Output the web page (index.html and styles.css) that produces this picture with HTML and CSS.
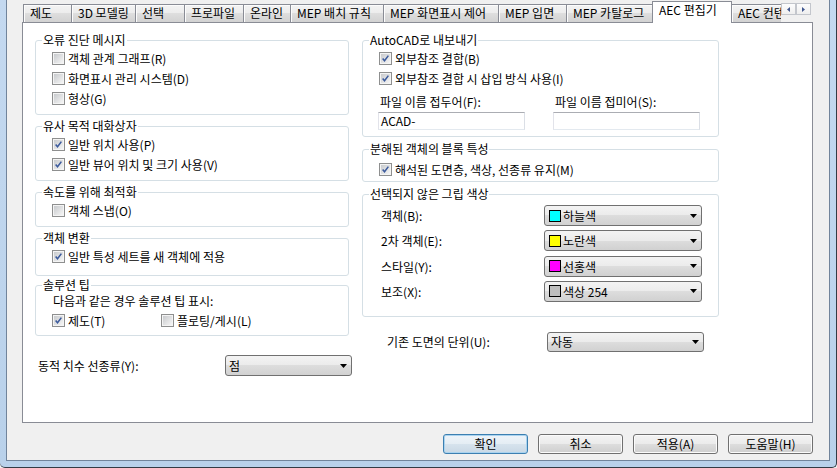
FILE: index.html
```html
<!DOCTYPE html>
<html>
  <head>
    <meta charset="utf-8" />
    <title>옵션 - AEC 편집기</title>
    <link rel="stylesheet" href="styles.css">
  </head>
  <body>
    <div class="frame">
      <div class="dialog">
        <div class="tabs">
          <div class="tab">제도</div>
          <div class="tab">3D 모델링</div>
          <div class="tab">선택</div>
          <div class="tab">프로파일</div>
          <div class="tab">온라인</div>
          <div class="tab">MEP 배치 규칙</div>
          <div class="tab">MEP 화면표시 제어</div>
          <div class="tab">MEP 입면</div>
          <div class="tab">MEP 카탈로그</div>
          <div class="tab active">AEC 편집기</div>
          <div class="tab">AEC 컨텐츠</div>
          <div class="tab-scroll">
            <span class="scroll-btn"><svg width="3" height="5" viewBox="0 0 3 5"><path d="M3 0 L0 2.5 L3 5 Z"/></svg></span>
            <span class="scroll-btn"><svg width="3" height="5" viewBox="0 0 3 5"><path d="M0 0 L3 2.5 L0 5 Z"/></svg></span>
          </div>
        </div>

        <div class="panel">
          <div class="column left">
            <fieldset class="group">
              <legend>오류 진단 메시지</legend>
              <div class="check"><span class="box"></span>객체 관계 그래프(R)</div>
              <div class="check"><span class="box"></span>화면표시 관리 시스템(D)</div>
              <div class="check"><span class="box"></span>형상(G)</div>
            </fieldset>
            <fieldset class="group">
              <legend>유사 목적 대화상자</legend>
              <div class="check"><span class="box"><svg viewBox="0 0 11 11"><path d="M2 5.5 L4.3 8.2 L9 2"/></svg></span>일반 위치 사용(P)</div>
              <div class="check"><span class="box"><svg viewBox="0 0 11 11"><path d="M2 5.5 L4.3 8.2 L9 2"/></svg></span>일반 뷰어 위치 및 크기 사용(V)</div>
            </fieldset>
            <fieldset class="group">
              <legend>속도를 위해 최적화</legend>
              <div class="check"><span class="box"></span>객체 스냅(O)</div>
            </fieldset>
            <fieldset class="group convert">
              <legend>객체 변환</legend>
              <div class="check"><span class="box"><svg viewBox="0 0 11 11"><path d="M2 5.5 L4.3 8.2 L9 2"/></svg></span>일반 특성 세트를 새 객체에 적용</div>
            </fieldset>
            <fieldset class="group tips">
              <legend>솔루션 팁</legend>
              <div class="hint">다음과 같은 경우 솔루션 팁 표시:</div>
              <div class="check-pair">
                <div class="check"><span class="box"><svg viewBox="0 0 11 11"><path d="M2 5.5 L4.3 8.2 L9 2"/></svg></span>제도(T)</div>
                <div class="check"><span class="box"></span>플로팅/게시(L)</div>
              </div>
            </fieldset>
            <div class="field-row linetype">
              <span class="field-label">동적 치수 선종류(Y):</span>
              <div class="combo"><span class="combo-text">점</span><svg class="combo-arrow" width="7" height="4" viewBox="0 0 7 4"><path d="M0 0 H7 L3.5 4 Z"/></svg></div>
            </div>
          </div>

          <div class="column right">
            <fieldset class="group">
              <legend>AutoCAD로 내보내기</legend>
              <div class="check"><span class="box"><svg viewBox="0 0 11 11"><path d="M2 5.5 L4.3 8.2 L9 2"/></svg></span>외부참조 결합(B)</div>
              <div class="check"><span class="box"><svg viewBox="0 0 11 11"><path d="M2 5.5 L4.3 8.2 L9 2"/></svg></span>외부참조 결합 시 삽입 방식 사용(I)</div>
              <div class="file-names">
                <span class="file-label">파일 이름 접두어(F):</span>
                <span class="file-label">파일 이름 접미어(S):</span>
                <div class="textbox">ACAD-</div>
                <div class="textbox"></div>
              </div>
            </fieldset>
            <fieldset class="group exploded">
              <legend>분해된 객체의 블록 특성</legend>
              <div class="check"><span class="box"><svg viewBox="0 0 11 11"><path d="M2 5.5 L4.3 8.2 L9 2"/></svg></span>해석된 도면층, 색상, 선종류 유지(M)</div>
            </fieldset>
            <fieldset class="group grips-group">
              <legend>선택되지 않은 그립 색상</legend>
              <div class="grips">
                <span class="grip-label">객체(B):</span>
                <div class="combo"><span class="swatch cyan"></span><span class="combo-text">하늘색</span><svg class="combo-arrow" width="7" height="4" viewBox="0 0 7 4"><path d="M0 0 H7 L3.5 4 Z"/></svg></div>
                <span class="grip-label">2차 객체(E):</span>
                <div class="combo"><span class="swatch yellow"></span><span class="combo-text">노란색</span><svg class="combo-arrow" width="7" height="4" viewBox="0 0 7 4"><path d="M0 0 H7 L3.5 4 Z"/></svg></div>
                <span class="grip-label">스타일(Y):</span>
                <div class="combo"><span class="swatch magenta"></span><span class="combo-text">선홍색</span><svg class="combo-arrow" width="7" height="4" viewBox="0 0 7 4"><path d="M0 0 H7 L3.5 4 Z"/></svg></div>
                <span class="grip-label">보조(X):</span>
                <div class="combo"><span class="swatch gray"></span><span class="combo-text">색상 254</span><svg class="combo-arrow" width="7" height="4" viewBox="0 0 7 4"><path d="M0 0 H7 L3.5 4 Z"/></svg></div>
              </div>
            </fieldset>
            <div class="field-row units">
              <span class="field-label">기존 도면의 단위(U):</span>
              <div class="combo"><span class="combo-text">자동</span><svg class="combo-arrow" width="7" height="4" viewBox="0 0 7 4"><path d="M0 0 H7 L3.5 4 Z"/></svg></div>
            </div>
          </div>
        </div>

        <div class="buttons">
          <button class="btn default">확인</button>
          <button class="btn">취소</button>
          <button class="btn">적용(A)</button>
          <button class="btn">도움말(H)</button>
        </div>
      </div>
    </div>
  </body>
</html>
```

FILE: styles.css
```css
body {
  margin: 0;
  font-family: "Noto Sans CJK KR", "Noto Sans", sans-serif;
  font-size: 12px;
  color: #000;
  background: #f0f0f0;
}
/* window glass around the dialog */
.frame {
  width: 837px;
  height: 468px;
  box-sizing: border-box;
  display: flex;
  padding: 0 6px 6px 6px;
  background: linear-gradient(to bottom, #c4d9f0, #b9d1ea);
  border-right: 1px solid #333b45;
  border-bottom: 1px solid #333b45;
  border-bottom-left-radius: 5px;
  border-bottom-right-radius: 5px;
}
.dialog {
  flex: 1;
  display: flex;
  flex-direction: column;
  background: #f0f0f0;
  border: 1px solid #71849b;
  border-top: none;
  padding: 0 16px 0 15px;
}
/* Tab strip */
.tabs {
  display: grid;
  grid-template-columns: 48px 64px 49px 59px 47px 93px 115px 68px 87px 78px 50px 31px;
  height: 22px;
  margin-left: 1px;
}
.tab {
  margin-top: 4px;
  height: 18px;
  box-sizing: border-box;
  padding-left: 6px;
  line-height: 15px;
  white-space: nowrap;
  overflow: hidden;
  border-top: 1px solid #898c95;
  border-left: 1px solid #898c95;
  background: linear-gradient(#f3f3f3, #ececec 50%, #dedede 50%, #d2d2d2);
  box-shadow: inset 1px 1px 0 #fcfcfc;
}
.tab.active {
  position: relative;
  z-index: 1;
  margin: 1px -1px 0 -1px;
  height: 22px;
  padding-top: 1px;
  line-height: 14px;
  background: #fff;
  border-right: 1px solid #898c95;
  box-shadow: none;
}
.tab-scroll {
  position: relative;
  z-index: 1;
  display: flex;
  margin-top: 3px;
  height: 12px;
  background: #f0f0f0;
}
.scroll-btn {
  width: 15px;
  height: 12px;
  box-sizing: border-box;
  border: 1px solid #c3c6cc;
  background: linear-gradient(#fdfdfd, #eeeeee);
  display: flex;
  align-items: center;
  justify-content: center;
}
.scroll-btn svg {
  fill: #40578f;
}
/* Page area */
.panel {
  height: 401px;
  box-sizing: border-box;
  background: #fff;
  border: 1px solid #898c95;
  display: flex;
  gap: 13px;
  padding: 10px 12px;
}
.column.left {
  width: 314px;
}
.column.right {
  width: 357px;
}
.group {
  margin: 0 0 4px 0;
  padding: 1px 0 6px 6px;
  border: 1px solid #d5dfe5;
  border-radius: 3px;
  min-width: 0;
}
.group legend {
  padding: 0 1px;
  line-height: 14px;
}
.group.convert {
  padding-bottom: 9px;
  margin-bottom: 2px;
}
.group.tips {
  padding-bottom: 5px;
}
.column.right .group {
  margin-bottom: 5px;
}
.check {
  display: flex;
  align-items: center;
  height: 20px;
  padding-left: 10px;
  white-space: nowrap;
}
.box {
  width: 13px;
  height: 13px;
  box-sizing: border-box;
  margin-right: 3px;
  padding: 1px;
  border: 1px solid #8e8f8f;
  background: linear-gradient(135deg, #c8cacd, #f5f5f5) content-box, #f4f4f4;
  flex: none;
}
.box svg {
  display: block;
  width: 9px;
  height: 9px;
  overflow: visible;
}
.box path {
  fill: none;
  stroke: #3b5a9c;
  stroke-width: 1.9;
}
.hint {
  height: 17px;
  line-height: 16px;
  padding-left: 11px;
}
.check-pair {
  display: flex;
}
.check-pair .check:first-child {
  width: 99px;
}
/* Combo boxes */
.combo {
  display: flex;
  align-items: center;
  height: 21px;
  box-sizing: border-box;
  padding: 0 4px 0 3px;
  border: 1px solid #707070;
  border-radius: 3px;
  background: linear-gradient(#f3f3f3, #ebebeb 50%, #dddddd 50%, #d1d1d1);
}
.combo-text {
  flex: 1;
  white-space: nowrap;
}
.combo-arrow {
  flex: none;
  fill: #000;
}
.swatch {
  width: 12px;
  height: 12px;
  box-sizing: border-box;
  border: 1px solid #000;
  margin: 0 2px 0 1px;
  flex: none;
}
.swatch.cyan { background: #00ffff; }
.swatch.yellow { background: #ffff00; }
.swatch.magenta { background: #ff00ff; }
.swatch.gray { background: #bebebe; }
.field-row {
  display: flex;
  align-items: center;
}
.field-row.linetype {
  margin-top: 19px;
  padding-left: 3px;
}
.linetype .field-label {
  width: 187px;
  flex: none;
}
.linetype .combo {
  width: 127px;
  flex: none;
}
.field-row.units {
  margin-top: 15px;
  padding-left: 25px;
}
.units .field-label {
  width: 160px;
  flex: none;
}
.units .combo {
  width: 157px;
  height: 20px;
  flex: none;
}
/* AutoCAD export fields */
.file-names {
  display: grid;
  grid-template-columns: 175px 148px;
  padding-left: 9px;
  margin-top: 7px;
  row-gap: 3px;
}
.file-label {
  padding-left: 2px;
  line-height: 14px;
}
.textbox {
  width: 147px;
  height: 18px;
  box-sizing: border-box;
  padding: 0 2px;
  line-height: 16px;
  border: 1px solid;
  border-color: #abadb3 #dbdfe6 #e3e9ef #e2e3ea;
  background: #fff;
}
.group.exploded {
  padding-top: 3px;
  padding-bottom: 2px;
}
.grips-group {
  padding-top: 4px;
  padding-bottom: 14px;
}
.grips {
  display: grid;
  grid-template-columns: 163px 158px;
  row-gap: 4.3px;
  padding-left: 12px;
  align-items: center;
}
/* Dialog buttons */
.buttons {
  display: flex;
  justify-content: flex-end;
  gap: 10px;
  margin-top: 11px;
}
.btn {
  width: 85px;
  height: 20px;
  padding: 0;
  font-family: inherit;
  font-size: 12px;
  line-height: 16px;
  color: #000;
  border: 1px solid #707070;
  border-radius: 3px;
  background: linear-gradient(#f3f3f3, #ebebeb 50%, #dddddd 50%, #cfcfcf);
  box-shadow: inset 0 0 0 1px #fbfbfb;
}
.btn.default {
  border-color: #3c7fb1;
  background: linear-gradient(#eef4f9, #e4edf4 50%, #d6e3ed 50%, #c9d8e5);
  box-shadow: inset 0 0 0 1px #a9d3ef;
}
```
